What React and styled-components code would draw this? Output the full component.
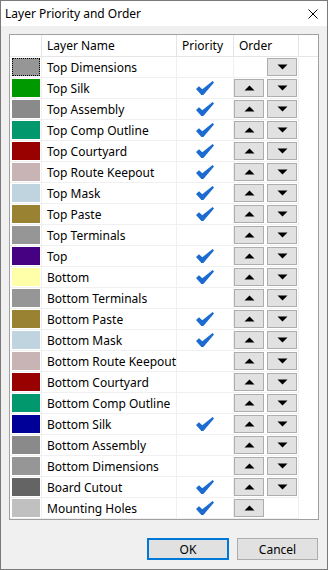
import React from 'react';
import styled, { createGlobalStyle } from 'styled-components';

const GlobalStyle = createGlobalStyle`
  html, body {
    margin: 0;
    padding: 0;
    background: #ffffff;
  }
  body {
    font-family: 'Noto Sans', 'Open Sans', sans-serif;
    font-size: 12px;
    color: #000;
  }
`;

const layers = [
  { name: 'Top Dimensions', color: '#969696', priority: false, focus: true },
  { name: 'Top Silk', color: '#009900', priority: true },
  { name: 'Top Assembly', color: '#8a8a8a', priority: true },
  { name: 'Top Comp Outline', color: '#00986c', priority: true },
  { name: 'Top Courtyard', color: '#990000', priority: true },
  { name: 'Top Route Keepout', color: '#c8b4b4', priority: true },
  { name: 'Top Mask', color: '#c0d4e0', priority: true },
  { name: 'Top Paste', color: '#998232', priority: true },
  { name: 'Top Terminals', color: '#969696', priority: false },
  { name: 'Top', color: '#460082', priority: true },
  { name: 'Bottom', color: '#ffffaa', priority: true },
  { name: 'Bottom Terminals', color: '#969696', priority: false },
  { name: 'Bottom Paste', color: '#998232', priority: true },
  { name: 'Bottom Mask', color: '#c0d4e0', priority: true },
  { name: 'Bottom Route Keepout', color: '#c8b4b4', priority: false },
  { name: 'Bottom Courtyard', color: '#990000', priority: false },
  { name: 'Bottom Comp Outline', color: '#00986c', priority: false },
  { name: 'Bottom Silk', color: '#000099', priority: true },
  { name: 'Bottom Assembly', color: '#8a8a8a', priority: false },
  { name: 'Bottom Dimensions', color: '#969696', priority: false },
  { name: 'Board Cutout', color: '#646464', priority: true },
  { name: 'Mounting Holes', color: '#c0c0c0', priority: true },
];

const Window = styled.div`
  box-sizing: border-box;
  width: 328px;
  height: 570px;
  border: 1px solid #7a7a7a;
  background: #f0f0f0;
  display: flex;
  flex-direction: column;
`;

const TitleBar = styled.div`
  height: 25px;
  background: #fff;
  display: flex;
  align-items: center;
  justify-content: space-between;
  padding: 0 9px 0 4px;
`;

const Title = styled.span`
  font-size: 12px;
  line-height: 25px;
`;

const Body = styled.div`
  flex: 1;
  display: flex;
  flex-direction: column;
  padding: 8px 8px 9px 8px;
`;

const Grid = styled.div`
  border: 1px solid #a0a0a0;
  background: #fff;
`;

const cols = '32px 135px 57px 65px 1fr';

const HeaderRow = styled.div`
  display: grid;
  grid-template-columns: ${cols};
  height: 22px;
`;

const HeaderCell = styled.div`
  box-sizing: border-box;
  border-bottom: 1px solid #e5e5e5;
  border-right: ${(p) => (p.$last ? 'none' : '1px solid #e5e5e5')};
  padding-left: 5px;
  line-height: 21px;
  white-space: nowrap;
`;

const Row = styled.div`
  display: grid;
  grid-template-columns: ${cols};
  height: 21px;
`;

const Cell = styled.div`
  box-sizing: border-box;
  border-bottom: ${(p) => (p.$plain ? 'none' : '1px solid #f0f0f0')};
  border-right: ${(p) => (p.$plain ? 'none' : '1px solid #f0f0f0')};
  display: flex;
  align-items: center;
  justify-content: ${(p) => p.$justify || 'flex-start'};
  padding-left: ${(p) => p.$pad || 0}px;
  white-space: nowrap;
`;

const Swatch = styled.div`
  box-sizing: border-box;
  width: 28px;
  height: 18px;
  margin-left: 2px;
  background: ${(p) => p.$color};
  border: ${(p) => (p.$focus ? '1px dotted #000' : 'none')};
`;

const OrderCell = styled(Cell)`
  gap: 3px;
`;

const ArrowButton = styled.div`
  box-sizing: border-box;
  width: 30px;
  height: 18px;
  background: #e1e1e1;
  border: 1px solid #adadad;
  display: flex;
  align-items: center;
  justify-content: center;
  visibility: ${(p) => (p.$hidden ? 'hidden' : 'visible')};
`;

const Footer = styled.div`
  margin-top: auto;
  display: flex;
  justify-content: flex-end;
  gap: 8px;
  padding-right: 1px;
`;

const DialogButton = styled.button`
  box-sizing: border-box;
  width: ${(p) => (p.$default ? 82 : 81)}px;
  height: 22px;
  background: #e1e1e1;
  border: ${(p) => (p.$default ? '2px solid #0078d7' : '1px solid #adadad')};
  font-family: 'Noto Sans', 'Open Sans', sans-serif;
  font-size: 12px;
  color: #000;
  padding: 0;
`;

const Triangle = ({ up }) => (
  <svg width="11" height="6" viewBox="0 0 11 6">
    <path d={up ? 'M0.5 5.5 L5.5 0.5 L10.5 5.5 Z' : 'M0.5 0.5 L10.5 0.5 L5.5 5.5 Z'} fill="#000" />
  </svg>
);

const Check = () => (
  <svg width="18" height="14" viewBox="0 0 18 14">
    <path d="M0 8 L3 5.3 L6.3 8.3 L16.6 0 L18 1.4 L7.4 14 L5.4 14 Z" fill="#1c6bd0" />
  </svg>
);

const CloseIcon = () => (
  <svg width="10" height="10" viewBox="0 0 10 10">
    <path d="M0.5 0.5 L9.5 9.5 M9.5 0.5 L0.5 9.5" stroke="#000" strokeWidth="1" />
  </svg>
);

export default function App() {
  return (
    <>
      <GlobalStyle />
      <Window>
        <TitleBar>
          <Title>Layer Priority and Order</Title>
          <CloseIcon />
        </TitleBar>
        <Body>
          <Grid>
            <HeaderRow>
              <HeaderCell />
              <HeaderCell>Layer Name</HeaderCell>
              <HeaderCell>Priority</HeaderCell>
              <HeaderCell>Order</HeaderCell>
              <HeaderCell $last />
            </HeaderRow>
            {layers.map((layer, i) => (
              <Row key={layer.name}>
                <Cell>
                  <Swatch $color={layer.color} $focus={layer.focus} />
                </Cell>
                <Cell $pad={5}>{layer.name}</Cell>
                <Cell $justify="center">{layer.priority && <Check />}</Cell>
                <OrderCell>
                  <ArrowButton $hidden={i === 0}>
                    <Triangle up />
                  </ArrowButton>
                  <ArrowButton $hidden={i === layers.length - 1}>
                    <Triangle />
                  </ArrowButton>
                </OrderCell>
                <Cell $plain />
              </Row>
            ))}
          </Grid>
          <Footer>
            <DialogButton $default>OK</DialogButton>
            <DialogButton>Cancel</DialogButton>
          </Footer>
        </Body>
      </Window>
    </>
  );
}
